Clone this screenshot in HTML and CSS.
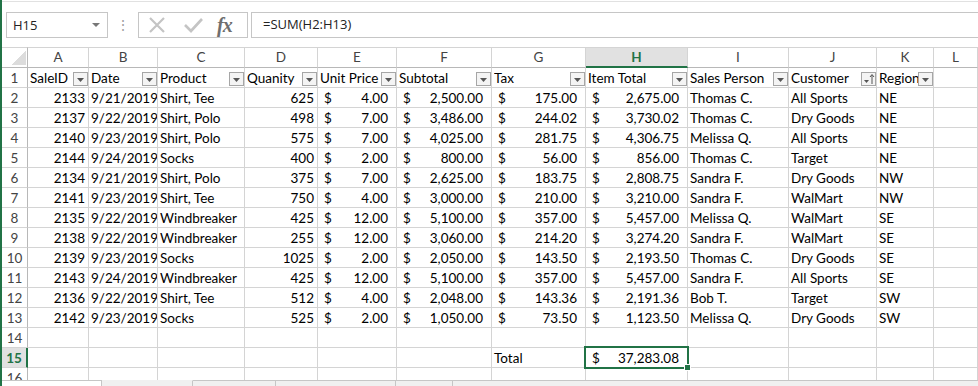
FILE: index.html
```html
<!DOCTYPE html>
<html lang="en">

<head>
    <meta charset="UTF-8">
    <meta name="viewport" content="width=device-width, initial-scale=1.0">
    <title>Sales 2019 - Excel</title>
    <link rel="stylesheet" href="styles.css">
</head>

<body>
    <div class="window">
        <div class="ribbon-edge"></div>

        <div class="formula-bar">
            <div class="name-box">
                <span>H15</span>
                <span class="name-arrow"></span>
            </div>
            <div class="grip">⋮</div>
            <div class="fx-buttons">
                <svg class="icon-cancel" width="18" height="16" viewBox="0 0 18 16">
                    <path d="M2 1 L16 15 M16 1 L2 15" stroke="#c4c4c4" stroke-width="2.2" fill="none" />
                </svg>
                <svg class="icon-enter" width="20" height="16" viewBox="0 0 20 16">
                    <path d="M2 8 L8 14 L19 2" stroke="#c4c4c4" stroke-width="2.6" fill="none" />
                </svg>
                <span class="fx">fx</span>
            </div>
            <div class="formula-input">=SUM(H2:H13)</div>
        </div>

        <div class="sheet" id="sheet">
            <!-- linhas geradas pelo script -->
        </div>

        <div class="status-bar">
            <div class="tab-nav"></div>
            <div class="tab-active"></div>
            <div class="bar-part w83"></div>
            <div class="bar-part w120"></div>
            <div class="bar-part w57"></div>
            <div class="bar-part grow"></div>
        </div>
    </div>

    <script>
        const letters = ['A', 'B', 'C', 'D', 'E', 'F', 'G', 'H', 'I', 'J', 'K', 'L'];
        const headers = ['SaleID', 'Date', 'Product', 'Quanity', 'Unit Price', 'Subtotal', 'Tax', 'Item Total', 'Sales Person', 'Customer', 'Region'];

        const sales = [
            ['2133', '9/21/2019', 'Shirt, Tee', '625', '4.00', '2,500.00', '175.00', '2,675.00', 'Thomas C.', 'All Sports', 'NE'],
            ['2137', '9/22/2019', 'Shirt, Polo', '498', '7.00', '3,486.00', '244.02', '3,730.02', 'Thomas C.', 'Dry Goods', 'NE'],
            ['2140', '9/23/2019', 'Shirt, Polo', '575', '7.00', '4,025.00', '281.75', '4,306.75', 'Melissa Q.', 'All Sports', 'NE'],
            ['2144', '9/24/2019', 'Socks', '400', '2.00', '800.00', '56.00', '856.00', 'Thomas C.', 'Target', 'NE'],
            ['2134', '9/21/2019', 'Shirt, Polo', '375', '7.00', '2,625.00', '183.75', '2,808.75', 'Sandra F.', 'Dry Goods', 'NW'],
            ['2141', '9/23/2019', 'Shirt, Tee', '750', '4.00', '3,000.00', '210.00', '3,210.00', 'Sandra F.', 'WalMart', 'NW'],
            ['2135', '9/22/2019', 'Windbreaker', '425', '12.00', '5,100.00', '357.00', '5,457.00', 'Melissa Q.', 'WalMart', 'SE'],
            ['2138', '9/22/2019', 'Windbreaker', '255', '12.00', '3,060.00', '214.20', '3,274.20', 'Sandra F.', 'WalMart', 'SE'],
            ['2139', '9/23/2019', 'Socks', '1025', '2.00', '2,050.00', '143.50', '2,193.50', 'Thomas C.', 'Dry Goods', 'SE'],
            ['2143', '9/24/2019', 'Windbreaker', '425', '12.00', '5,100.00', '357.00', '5,457.00', 'Sandra F.', 'All Sports', 'SE'],
            ['2136', '9/22/2019', 'Shirt, Tee', '512', '4.00', '2,048.00', '143.36', '2,191.36', 'Bob T.', 'Target', 'SW'],
            ['2142', '9/23/2019', 'Socks', '525', '2.00', '1,050.00', '73.50', '1,123.50', 'Melissa Q.', 'Dry Goods', 'SW']
        ];

        // 0 = numero, 1 = texto, 2 = contabil
        const kinds = [0, 0, 1, 0, 2, 2, 2, 2, 1, 1, 1];

        const sheet = document.getElementById('sheet');

        function makeRow(className) {
            const row = document.createElement('div');
            row.className = 'row ' + className;
            sheet.appendChild(row);
            return row;
        }

        function rowHead(row, n, selected) {
            const head = document.createElement('div');
            head.className = selected ? 'row-head selected' : 'row-head';
            head.textContent = n;
            row.appendChild(head);
        }

        function cell(row, value, kind) {
            const c = document.createElement('div');
            if (kind === 2) {
                c.className = 'cell acct';
                c.innerHTML = `<span>$</span><span>${value}</span>`;
            } else if (kind === 0) {
                c.className = 'cell num';
                c.textContent = value;
            } else {
                c.className = 'cell';
                c.textContent = value;
            }
            row.appendChild(c);
            return c;
        }

        function emptyCells(row, count) {
            for (let i = 0; i < count; i++) cell(row, '', 1);
        }

        // letras das colunas
        const colRow = makeRow('col-heads');
        const corner = document.createElement('div');
        corner.className = 'corner';
        colRow.appendChild(corner);
        letters.forEach(l => {
            const h = document.createElement('div');
            h.className = l === 'H' ? 'col-head selected' : 'col-head';
            h.textContent = l;
            colRow.appendChild(h);
        });

        // cabecalho com filtros
        const headRow = makeRow('');
        rowHead(headRow, 1, false);
        headers.forEach(text => {
            const c = document.createElement('div');
            c.className = 'cell filter-cell';
            const sorted = text === 'Customer';
            c.innerHTML = `<span class="filter-text">${text}</span>
                <span class="filter-btn">${sorted
                    ? '<svg width="13" height="12" viewBox="0 0 13 12"><path d="M2 7 L7 7 L4.5 10 Z" fill="#555"/><path d="M10 11 L10 2 M8 4 L10 1.5 L12 4" stroke="#555" stroke-width="1" fill="none"/></svg>'
                    : '<svg width="13" height="12" viewBox="0 0 13 12"><path d="M3 5 L10 5 L6.5 9 Z" fill="#555"/></svg>'}</span>`;
            headRow.appendChild(c);
        });
        emptyCells(headRow, 1);

        // linhas de dados
        sales.forEach((sale, i) => {
            const row = makeRow('');
            rowHead(row, i + 2, false);
            sale.forEach((value, j) => cell(row, value, kinds[j]));
            emptyCells(row, 1);
        });

        // linha 14 vazia
        const r14 = makeRow('');
        rowHead(r14, 14, false);
        emptyCells(r14, 12);

        // linha 15 com total
        const r15 = makeRow('');
        rowHead(r15, 15, true);
        emptyCells(r15, 6);
        cell(r15, 'Total', 1);
        const total = cell(r15, '37,283.08', 2);
        total.classList.add('active-cell');
        total.insertAdjacentHTML('beforeend', '<span class="fill-handle"></span>');
        emptyCells(r15, 4);

        const r16 = makeRow('');
        rowHead(r16, 16, false);
        emptyCells(r16, 12);
    </script>
</body>

</html>
```

FILE: styles.css
```css
body {
    margin: 0;
    padding: 0;
    background-color: #fff;
    font-family: Lato, "Liberation Sans", sans-serif;
    overflow: hidden;
}

.window {
    height: 386px;
    border-left: 2px solid #217346;
    overflow: hidden;
    display: flex;
    flex-direction: column;
}

.ribbon-edge {
    margin-top: 1px;
    height: 10px;
    border-top: 1px solid #e1e1e1;
}

/* barra de formulas */
.formula-bar {
    display: flex;
    height: 26px;
    margin-bottom: 9px;
    flex-shrink: 0;
}

.name-box {
    margin-left: 4px;
    width: 102px;
    box-sizing: border-box;
    border: 1px solid #c6c6c6;
    display: flex;
    align-items: center;
    justify-content: space-between;
    font-family: "Open Sans", "Noto Sans", sans-serif;
    font-size: 13px;
    color: #222;
    padding-left: 6px;
}

.name-arrow {
    width: 0;
    height: 0;
    border-left: 4px solid transparent;
    border-right: 4px solid transparent;
    border-top: 4px solid #777;
    margin-right: 7px;
}

.grip {
    width: 30px;
    text-align: center;
    color: #a0a0a0;
    font-size: 14px;
    line-height: 26px;
}

.fx-buttons {
    width: 110px;
    box-sizing: border-box;
    border: 1px solid #c6c6c6;
    display: flex;
    align-items: center;
    padding-left: 9px;
}

.icon-enter {
    margin-left: 17px;
}

.fx {
    margin-left: 14px;
    font-family: "Liberation Serif", serif;
    font-style: italic;
    font-weight: bold;
    font-size: 20px;
    color: #6e6e6e;
    letter-spacing: -1px;
    line-height: 20px;
}

.formula-input {
    flex: 1;
    margin-left: 3px;
    border-top: 1px solid #c6c6c6;
    border-bottom: 1px solid #c6c6c6;
    border-left: 1px solid #c6c6c6;
    font-family: "Open Sans", "Noto Sans", sans-serif;
    font-size: 13px;
    color: #222;
    padding-left: 11px;
    line-height: 23px;
}

/* planilha */
.sheet {
    height: 333px;
    overflow: hidden;
    flex-shrink: 0;
}

.row {
    display: grid;
    grid-template-columns: 26px 61px 69px 87px 73px 79px 95px 94px 102px 101px 88px 57px 1fr;
    height: 20px;
}

.row > div {
    box-sizing: border-box;
    border-right: 1px solid #d4d4d4;
    border-bottom: 1px solid #d4d4d4;
    height: 20px;
}

.col-heads {
    height: 21px;
}

.col-heads > div {
    height: 21px;
    border-top: 1px solid #d4d4d4;
    border-bottom: 1px solid #b8b8b8;
}

.corner {
    border-right-color: #b8b8b8 !important;
    background: linear-gradient(135deg, transparent 50%, #dcdcdc 50%) no-repeat right 1px bottom 2px / 14px 14px;
}

.col-head {
    text-align: center;
    color: #444;
    font-size: 13.5px;
    line-height: 19px;
}

.col-head.selected {
    background-color: #e1e1e1;
    color: #217346;
    font-weight: bold;
    border-bottom: 2px solid #217346 !important;
}

.row-head {
    text-align: center;
    color: #444;
    font-size: 13.5px;
    line-height: 20px;
    border-right-color: #b8b8b8 !important;
}

.row-head.selected {
    background-color: #e1e1e1;
    color: #217346;
    font-weight: bold;
    border-right: 2px solid #217346 !important;
}

.cell {
    font-size: 13.5px;
    color: #000;
    line-height: 20px;
    padding: 0 2px;
    white-space: nowrap;
    overflow: hidden;
}

.cell.num {
    text-align: right;
    padding-right: 3px;
}

.cell.acct {
    display: flex;
    justify-content: space-between;
    padding-left: 6px;
    padding-right: 8px;
}

/* filtros */
.filter-cell {
    display: flex;
    padding-right: 0;
}

.filter-text {
    flex: 1;
    overflow: hidden;
    white-space: nowrap;
}

.filter-btn {
    width: 15px;
    height: 14px;
    box-sizing: border-box;
    margin-top: 4px;
    border: 1px solid #a6a6a6;
    background-color: #f4f4f4;
    display: flex;
    justify-content: center;
    align-items: center;
    flex-shrink: 0;
}

/* celula ativa */
.active-cell {
    position: relative;
    overflow: visible;
}

.active-cell::after {
    content: "";
    position: absolute;
    top: -2px;
    left: -2px;
    right: -2px;
    bottom: -2px;
    border: 2px solid #217346;
}

.fill-handle {
    position: absolute;
    right: -4px;
    bottom: -4px;
    width: 5px;
    height: 5px;
    background-color: #217346;
    border: 1px solid #fff;
    z-index: 2;
}

/* rodape */
.status-bar {
    flex: 1;
    display: flex;
    background-color: #f0f0f0;
}

.status-bar > div {
    border-top: 1px solid #c6c6c6;
    border-right: 1px solid #c6c6c6;
}

.tab-nav {
    width: 99px;
    background-color: #fff;
}

.tab-active {
    width: 90px;
    background-color: #f0f0f0;
    border-top-color: transparent !important;
}

.w83 {
    width: 82px;
}

.w120 {
    width: 119px;
}

.w57 {
    width: 56px;
}

.grow {
    flex: 1;
    border-right: none !important;
}
```
